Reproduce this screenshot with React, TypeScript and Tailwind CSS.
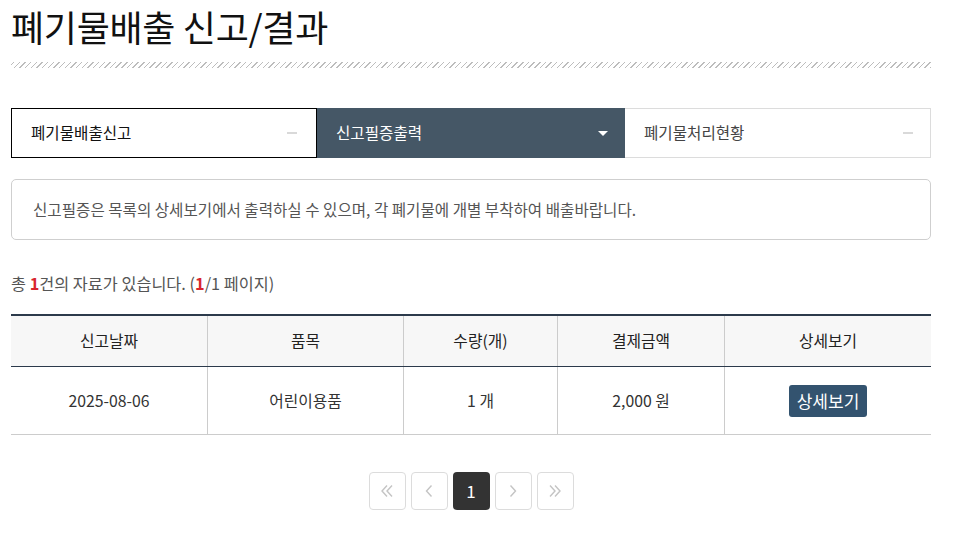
import React from "react";

const F = { fontFamily: '"Noto Sans CJK KR", "Noto Sans", sans-serif' };

function Minus() {
  return <span className="block w-[10px] h-[2px] bg-[#d9d9d9]" />;
}

export default function App() {
  const cols = ["w-[197px]", "w-[196px]", "w-[154px]", "w-[167px]", "w-[206px]"];
  return (
    <div className="w-[955px] h-[557px] bg-white overflow-hidden" style={F}>
      <div className="ml-[11px] w-[920px]">
        <h1 className="text-[36px] leading-[52px] text-[#111] tracking-[-0.3px]">폐기물배출 신고/결과</h1>
        <div className="mt-[10px] h-[6px] bg-[repeating-linear-gradient(-45deg,#bdbdbd_0px,#bdbdbd_1px,transparent_1px,transparent_4px)]" />

        <div className="mt-[40px] flex h-[50px]">
          <div className="w-[306px] border border-black flex items-center justify-between pl-[19px] pr-[19px] text-[15.6px] text-[#111]">
            <span>폐기물배출신고</span>
            <Minus />
          </div>
          <div className="w-[308px] bg-[#455766] flex items-center justify-between pl-[19px] pr-[17px] text-[15.6px] text-white">
            <span>신고필증출력</span>
            <span className="block w-0 h-0 border-l-[5px] border-r-[5px] border-t-[5px] border-l-transparent border-r-transparent border-t-white" />
          </div>
          <div className="w-[306px] border border-[#dcdcdc] border-l-0 flex items-center justify-between pl-[19px] pr-[17px] text-[15.6px] text-[#444]">
            <span>폐기물처리현황</span>
            <Minus />
          </div>
        </div>

        <div className="mt-[21px] h-[61px] border border-[#cfcfcf] rounded-[5px] flex items-center pl-[21px] text-[15.6px] text-[#555]">
          신고필증은 목록의 상세보기에서 출력하실 수 있으며, 각 폐기물에 개별 부착하여 배출바랍니다.
        </div>

        <div className="mt-[32px] text-[16.3px] leading-[22px] text-[#555]">
          총 <span className="text-[#d8262d] font-semibold">1</span>건의 자료가 있습니다. (<span className="text-[#d8262d] font-semibold">1</span>/1 페이지)
        </div>

        <div className="mt-[20px] border-t-2 border-[#2c3a4b]">
          <div className="flex h-[51px] bg-[#f7f7f7] border-b border-[#2c3a4b] text-[15.8px] text-[#222]">
            {["신고날짜", "품목", "수량(개)", "결제금액", "상세보기"].map((t, i) => (
              <div key={t} className={`${cols[i]} flex items-center justify-center ${i < 4 ? "border-r border-[#cccccc]" : ""}`}>{t}</div>
            ))}
          </div>
          <div className="flex h-[68px] border-b border-[#cccccc] text-[15.8px] text-[#333]">
            {["2025-08-06", "어린이용품", "1 개", "2,000 원"].map((t, i) => (
              <div key={t} className={`${cols[i]} flex items-center justify-center border-r border-[#cccccc]`}>{t}</div>
            ))}
            <div className={`${cols[4]} flex items-center justify-center`}>
              <span className="h-[32px] px-[8px] rounded-[3px] bg-[#33536f] text-white text-[17px] flex items-center">상세보기</span>
            </div>
          </div>
        </div>

        <div className="mt-[37px] flex justify-center gap-[5px]">
          {["«", "‹", "1", "›", "»"].map((t, i) => (
            <div key={i} className={`w-[37px] h-[38px] rounded-[4px] flex items-center justify-center ${i === 2 ? "bg-[#333] text-white text-[17px]" : "border border-[#dcdcdc]"}`}>
              {i === 2 ? "1" : (
                <svg width="18" height="18" viewBox="0 0 18 18" fill="none" stroke="#c4c4c4" strokeWidth="1.4">
                  {i === 0 && <><path d="M9 3.5L4 9L9 14.5" /><path d="M14 3.5L9 9L14 14.5" /></>}
                  {i === 1 && <path d="M11.5 3.5L6.5 9L11.5 14.5" />}
                  {i === 3 && <path d="M6.5 3.5L11.5 9L6.5 14.5" />}
                  {i === 4 && <><path d="M4 3.5L9 9L4 14.5" /><path d="M9 3.5L14 9L9 14.5" /></>}
                </svg>
              )}
            </div>
          ))}
        </div>
      </div>
    </div>
  );
}
